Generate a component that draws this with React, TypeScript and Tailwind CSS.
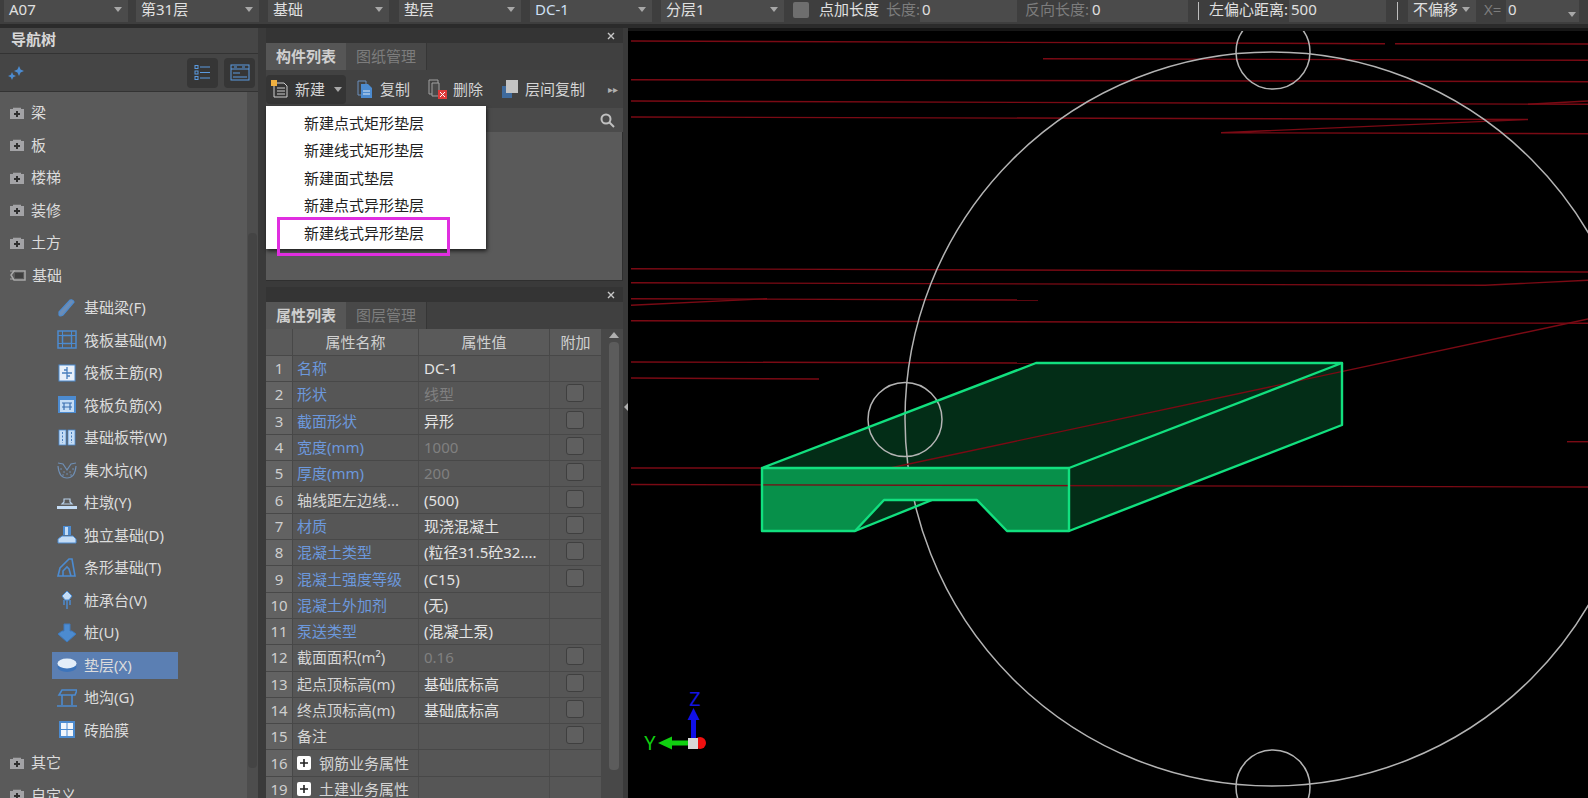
import React from 'react'

const Arrow = () => (
  <svg width="8" height="5" viewBox="0 0 8 5" className="shrink-0">
    <path d="M0 0h8L4 5z" fill="#a8a8a8" />
  </svg>
)

const Select = ({ label, className, blue }: { label: string; className: string; blue?: boolean }) => (
  <div className={`flex h-[22px] items-center justify-between bg-[#4b4b4b] pb-[3px] pl-[5px] pr-[6px] ${className}`}>
    <span className={blue ? 'text-[#cfe0f5]' : 'text-[#e0e0e0]'}>{label}</span>
    <Arrow />
  </div>
)

const Field = ({ value, className }: { value: string; className: string }) => (
  <div className={`flex h-[22px] items-center bg-[#4b4b4b] pb-[3px] pl-[2px] text-[#e0e0e0] ${className}`}>{value}</div>
)

const Folder = ({ open }: { open?: boolean }) =>
  open ? (
    <svg width="17" height="14" viewBox="0 0 17 14" fill="none" className="shrink-0">
      <path d="M1 3h5M1 11h4" stroke="#8f8f8f" strokeWidth="1.5" />
      <path d="M5 3h11v9H5l-3-5z" stroke="#a8a8a8" strokeWidth="1.5" />
      <rect x="6" y="5" width="8" height="5" fill="#3f3f3f" />
    </svg>
  ) : (
    <svg width="16" height="14" viewBox="0 0 16 14" className="shrink-0">
      <path d="M1 3h3V1h8v2h3v10H1z" fill="#a3a3a6" />
      <path d="M4 1.5h8" stroke="#6d6d6d" />
      <path d="M8 5v6M5 8h6" stroke="#2f2f2f" strokeWidth="2" />
    </svg>
  )

const B = '#4c8bd0'
const L = '#c4dcf5'

const icons: Record<string, React.ReactNode> = {
  beam: <path d="M2 14L13 2q3-1 4 2L6 17q-3 2-4 0z" fill="#6d8db5" stroke={B} strokeWidth="1.2" />,
  raft: (
    <g fill="none" stroke={B} strokeWidth="1.5">
      <rect x="1" y="1" width="18" height="17" />
      <rect x="5.5" y="5.5" width="9" height="8" />
      <path d="M1 5.5h18M1 13.5h18M5.5 1v17M14.5 1v17" strokeWidth="1" />
    </g>
  ),
  main: (
    <g>
      <rect x="2" y="2" width="16" height="16" fill="#e8f0fa" stroke={B} />
      <path d="M10 4v12M5 10h10M7 7h3M10 13h3" stroke="#4a7fbd" strokeWidth="1.3" fill="none" />
    </g>
  ),
  neg: (
    <g>
      <rect x="1" y="1" width="18" height="17" fill={B} />
      <rect x="3" y="5" width="14" height="12" fill={L} />
      <path d="M5 8h10M7 8v7M13 8v7M5 12h10" stroke="#3a6fb0" strokeWidth="1.2" fill="none" />
    </g>
  ),
  strip: (
    <g>
      <rect x="2" y="2" width="7" height="15" fill={L} stroke={B} strokeWidth="0.8" />
      <rect x="11" y="2" width="7" height="15" fill={L} stroke={B} strokeWidth="0.8" />
      <path d="M5.5 4v11M14.5 4v11" stroke="#4a7fbd" strokeDasharray="2 1.5" />
    </g>
  ),
  pit: (
    <g fill="none" stroke="#6f8fb5">
      <path d="M1 3l5 1 4 6 4-6 5-1M1 6q1 12 9 12t9-12" strokeWidth="1.2" />
      <path d="M4 9h.1M7 12h.1M10 14h.1M13 12h.1M16 9h.1M6 15h.1M14 15h.1" strokeWidth="1.6" strokeLinecap="round" />
    </g>
  ),
  cap: (
    <g>
      <path d="M7 9V6h6v3l2 2H5z" fill="none" stroke="#b7cfe8" strokeWidth="1.2" />
      <rect x="0" y="13" width="20" height="3" fill={L} />
    </g>
  ),
  isolated: (
    <g>
      <path d="M6 1h8v9H6z" fill={B} />
      <path d="M8 2h3v8H8z" fill={L} />
      <path d="M1 18v-4l4-3h11l3 3v4z" fill={L} stroke={B} />
    </g>
  ),
  stripF: <path d="M1 18l2-8 9-9h3l3 17zM6 18v-5l4-4 2 2 2 7" fill="none" stroke={B} strokeWidth="1.6" />,
  pilecap: (
    <g>
      <path d="M10 1l5 5-3 4H8L5 6z" fill={L} stroke={B} />
      <path d="M7 10v5M10 10v9M13 10v5" stroke={B} strokeWidth="1.5" />
    </g>
  ),
  pile: <path d="M7 1h6v7h2l4 3-9 8-9-8 4-3h2z" fill={B} stroke="#3e79bb" />,
  pad: (
    <g>
      <ellipse cx="10" cy="12" rx="9.5" ry="5" fill="#3c74bb" />
      <ellipse cx="10" cy="8.5" rx="9.5" ry="5" fill="#e3eef9" />
    </g>
  ),
  ditch: (
    <g fill="none" stroke={B} strokeWidth="1.6">
      <path d="M2 7h16l2-5H5zM2 7h16v0M5 7v10M15 7v10M0 18h20" />
    </g>
  ),
  brick: (
    <g>
      <rect x="2" y="1" width="16" height="17" fill={B} />
      <rect x="4" y="3" width="5.5" height="6" fill="#f2f6fb" />
      <rect x="10.5" y="3" width="5.5" height="6" fill="#f2f6fb" />
      <rect x="4" y="10" width="5.5" height="6" fill="#f2f6fb" />
      <rect x="10.5" y="10" width="5.5" height="6" fill="#f2f6fb" />
    </g>
  ),
}

const tree: { label: string; icon?: string; open?: boolean; active?: boolean }[] = [
  { label: '梁' },
  { label: '板' },
  { label: '楼梯' },
  { label: '装修' },
  { label: '土方' },
  { label: '基础', open: true },
  { label: '基础梁(F)', icon: 'beam' },
  { label: '筏板基础(M)', icon: 'raft' },
  { label: '筏板主筋(R)', icon: 'main' },
  { label: '筏板负筋(X)', icon: 'neg' },
  { label: '基础板带(W)', icon: 'strip' },
  { label: '集水坑(K)', icon: 'pit' },
  { label: '柱墩(Y)', icon: 'cap' },
  { label: '独立基础(D)', icon: 'isolated' },
  { label: '条形基础(T)', icon: 'stripF' },
  { label: '桩承台(V)', icon: 'pilecap' },
  { label: '桩(U)', icon: 'pile' },
  { label: '垫层(X)', icon: 'pad', active: true },
  { label: '地沟(G)', icon: 'ditch' },
  { label: '砖胎膜', icon: 'brick' },
  { label: '其它' },
  { label: '自定义' },
]

const TreeRow = ({ item }: { item: (typeof tree)[number] }) => {
  if (!item.icon) {
    return (
      <div className="flex h-[32.5px] shrink-0 items-center gap-[6px] pl-[9px] text-[#dcdcdc]">
        <Folder open={item.open} />
        <span>{item.label}</span>
      </div>
    )
  }
  return (
    <div className="flex h-[32.5px] shrink-0 items-center pl-[52px]">
      <div className={`flex h-[27px] w-[126px] items-center pl-[5px] text-[#dcdcdc] ${item.active ? 'bg-[#5b7fb3]' : ''}`}>
        <svg width="20" height="20" viewBox="0 0 20 20" className="mr-[7px] shrink-0">
          {icons[item.icon]}
        </svg>
        <span className="whitespace-nowrap">{item.label}</span>
      </div>
    </div>
  )
}

type Row = { n: string; name: string; value?: string; kind?: 'blue' | 'plain'; dim?: boolean; box?: boolean; plus?: boolean }

const rows: Row[] = [
  { n: '1', name: '名称', value: 'DC-1', kind: 'blue' },
  { n: '2', name: '形状', value: '线型', kind: 'blue', dim: true, box: true },
  { n: '3', name: '截面形状', value: '异形', kind: 'blue', box: true },
  { n: '4', name: '宽度(mm)', value: '1000', kind: 'blue', dim: true, box: true },
  { n: '5', name: '厚度(mm)', value: '200', kind: 'blue', dim: true, box: true },
  { n: '6', name: '轴线距左边线...', value: '(500)', box: true },
  { n: '7', name: '材质', value: '现浇混凝土', kind: 'blue', box: true },
  { n: '8', name: '混凝土类型', value: '(粒径31.5砼32....', kind: 'blue', box: true },
  { n: '9', name: '混凝土强度等级', value: '(C15)', kind: 'blue', box: true },
  { n: '10', name: '混凝土外加剂', value: '(无)', kind: 'blue' },
  { n: '11', name: '泵送类型', value: '(混凝土泵)', kind: 'blue' },
  { n: '12', name: '截面面积(m²)', value: '0.16', dim: true, box: true },
  { n: '13', name: '起点顶标高(m)', value: '基础底标高', box: true },
  { n: '14', name: '终点顶标高(m)', value: '基础底标高', box: true },
  { n: '15', name: '备注', box: true },
  { n: '16', name: '钢筋业务属性', plus: true },
  { n: '19', name: '土建业务属性', plus: true },
]

const PropRow = ({ row }: { row: Row }) => (
  <div className="flex h-[26.3px] shrink-0 border-b border-[#484848]">
    <div className="flex w-[27px] items-center justify-center border-r border-[#484848] bg-[#626262] text-[#cfcfcf]">{row.n}</div>
    <div className={`flex w-[126px] items-center whitespace-nowrap border-r border-[#4b4b4b] pl-[4px] ${row.kind === 'blue' ? 'text-[#6c98dc]' : 'text-[#d4d4d4]'}`}>
      {row.plus && (
        <span className="mr-[8px] flex h-[14px] w-[14px] items-center justify-center rounded-[2px] bg-white">
          <svg width="8" height="8" viewBox="0 0 8 8">
            <path d="M4 0v8M0 4h8" stroke="#222" strokeWidth="1.6" />
          </svg>
        </span>
      )}
      {row.name}
    </div>
    <div className={`flex w-[131px] items-center whitespace-nowrap border-r border-[#4b4b4b] pl-[5px] ${row.dim ? 'text-[#808080]' : 'text-[#e4e4e4]'}`}>
      {row.value}
    </div>
    <div className="flex w-[51px] items-center justify-center pr-[2px]">
      {row.box && <div className="mb-[3px] h-[18px] w-[18px] rounded-[3px] border border-[#3f3f3f] bg-[#5f5f5f]" />}
    </div>
  </div>
)

const Close = () => (
  <div className="flex h-[15px] shrink-0 items-center justify-end bg-[#343434] pr-[8px] pt-[1px]">
    <svg width="8" height="8" viewBox="0 0 8 8">
      <path d="M1 1l6 6M7 1L1 7" stroke="#c8c8c8" strokeWidth="1.4" />
    </svg>
  </div>
)

const Tabs = ({ a, b }: { a: string; b: string }) => (
  <div className="flex h-[27px] shrink-0 bg-[#404040]">
    <div className="flex w-[80px] items-center justify-center bg-[#565656] font-bold text-[#cfcfcf]">{a}</div>
    <div className="flex w-[81px] items-center justify-center border-r border-[#363636] bg-[#484848] text-[#7d7d7d]">{b}</div>
  </div>
)

const menu = ['新建点式矩形垫层', '新建线式矩形垫层', '新建面式垫层', '新建点式异形垫层', '新建线式异形垫层']

const redLines = [
  '631,41 1385,43.7',
  '1395,43.7 1588,44',
  '1043,58.7 1588,60.3',
  '631,79.7 1588,81.7',
  '631,101 1588,104.3',
  '631,117 1528,119.5 1221,132.7 1588,133.7',
  '1528,104.3 1588,101',
  '631,268.7 1588,272',
  '631,282.7 1485,285.3 1588,280.3',
  '631,298.7 1038,300',
  '631,305.3 767,298.7',
  '631,320.7 1588,323.3',
  '631,362 1036,363',
  '631,378 819,379',
  '631,468 762,468',
  '1567,441.7 1588,441.7',
]

const Canvas = () => (
  <svg viewBox="628 31 960 767" className="h-full w-full">
    <g fill="none" stroke="#7a0a14" strokeWidth="1.4">
      {redLines.map(p => (
        <polyline key={p} points={p} />
      ))}
    </g>
    {/* slab back faces sit under the axis circles */}
    <path d="M1069 468L1342 363V425L1069 531Z" fill="#032d17" />
    <path d="M762 468L1036 363H1342L1069 468Z" fill="#032d17" />
    <path d="M855 531L884 500H932Z" fill="#032d17" />
    <g fill="none" stroke="#b4b4b4" strokeWidth="1.5">
      <circle cx="1272" cy="419" r="367" />
      <circle cx="1273" cy="52" r="37" />
      <circle cx="1273" cy="787" r="37" />
      <circle cx="905" cy="419.5" r="37" />
    </g>
    <path d="M762 468H1069V531H1007L977 500H884L855 531H762Z" fill="#07904a" />
    <path d="M890 468L1588 319" stroke="#7a0a14" strokeWidth="1.4" fill="none" />
    <path d="M631 484.5L1588 487" stroke="#7a0a14" strokeWidth="1.4" fill="none" />
    <g fill="none" stroke="#12e07f" strokeWidth="2.4" strokeLinejoin="round">
      <path d="M762 468L1036 363H1342L1069 468H762V531H855L884 500H977L1007 531H1069V468" />
      <path d="M1342 363V425L1069 531" />
      <path d="M855 531L932 500" />
    </g>
    <circle cx="700" cy="743" r="6" fill="#f01010" />
    <path d="M693.5 742V717" stroke="#1010e8" strokeWidth="5" />
    <path d="M693.5 708l-6 12h12z" fill="#1010e8" />
    <path d="M668 743H690" stroke="#10d010" strokeWidth="5" />
    <path d="M658 743l14-6.500v13z" fill="#10d010" />
    <rect x="688" y="738" width="10" height="11" fill="#d8d8d8" />
    <text x="695" y="706" textAnchor="middle" fill="#1414e0" fontSize="20">Z</text>
    <text x="650" y="750" textAnchor="middle" fill="#10d010" fontSize="20">Y</text>
  </svg>
)

export default function App() {
  return (
    <div className="flex h-[798px] w-[1588px] flex-col overflow-hidden bg-[#3a3a3a] font-['Noto_Sans','Noto_Sans_CJK_SC',sans-serif] text-[15px] leading-none">
      {/* top options bar */}
      <div className="flex h-[24px] shrink-0 items-start whitespace-nowrap bg-[#3e3e3e] pl-[4px]">
        <Select label="A07" className="w-[124px]" />
        <Select label="第31层" className="ml-[8px] w-[123px]" />
        <Select label="基础" className="ml-[9px] w-[121px]" />
        <Select label="垫层" className="ml-[10px] w-[122px]" />
        <Select label="DC-1" className="ml-[9px] w-[122px]" blue />
        <Select label="分层1" className="ml-[9px] w-[123px]" />
        <div className="ml-[9px] mt-[2px] h-[16px] w-[16px] rounded-[2px] bg-[#6e6e6e]" />
        <span className="ml-[10px] mt-[2px] w-[60px] text-[#e0e0e0]">点加长度</span>
        <span className="ml-[7px] mt-[2px] w-[34px] text-[#7c7c7c]">长度:</span>
        <Field value="0" className="w-[97px]" />
        <span className="ml-[8px] mt-[2px] w-[65px] text-[#7c7c7c]">反向长度:</span>
        <Field value="0" className="w-[98px]" />
        <div className="ml-[10px] mt-[2px] h-[18px] w-[1px] bg-[#bdbdbd]" />
        <span className="ml-[10px] mt-[2px] w-[80px] text-[#e0e0e0]">左偏心距离:</span>
        <Field value="500" className="w-[97px]" />
        <div className="ml-[11px] mt-[2px] h-[18px] w-[1px] bg-[#bdbdbd]" />
        <Select label="不偏移" className="ml-[10px] w-[68px]" />
        <span className="ml-[8px] mt-[2px] w-[22px] text-[#7c7c7c]">X=</span>
        <div className="flex h-[22px] w-[73px] items-center justify-between bg-[#4b4b4b] pb-[3px] pl-[2px] pr-[3px] text-[#e0e0e0]">
          0
          <span className="mt-[9px]">
            <Arrow />
          </span>
        </div>
      </div>
      <div className="h-[4px] shrink-0 bg-[#2b2b2b]" />

      <div className="flex min-h-0 flex-1">
        {/* navigation tree */}
        <div className="flex w-[258px] shrink-0 flex-col">
          <div className="flex h-[26px] shrink-0 items-center border-b border-[#333] bg-[#464646] pb-[2px] pl-[11px] font-bold text-[#d8d8d8]">导航树</div>
          <div className="flex h-[38px] shrink-0 items-center border-b border-[#333] bg-[#454545] pl-[8px] pr-[3px]">
            <svg width="17" height="14" viewBox="0 0 17 14">
              <path d="M11 0l1.6 3.4L16 5l-3.4 1.6L11 10 9.4 6.6 6 5l3.4-1.6zM4 6l1.2 2.8L8 10l-2.8 1.2L4 14l-1.2-2.8L0 10l2.8-1.2z" fill="#4c8bd0" />
            </svg>
            <div className="ml-auto flex h-[30px] w-[31px] items-center justify-center rounded-[4px] bg-[#363636]">
              <svg width="17" height="17" viewBox="0 0 17 17" fill="none" stroke="#5a9ae0">
                <path d="M6 3h10M6 8.5h10M6 14h10" />
                <rect x="1" y="1.5" width="3" height="3" />
                <rect x="1" y="7" width="3" height="3" />
                <rect x="1" y="12.5" width="3" height="3" />
              </svg>
            </div>
            <div className="ml-[6px] flex h-[30px] w-[31px] items-center justify-center rounded-[4px] bg-[#363636]">
              <svg width="20" height="17" viewBox="0 0 20 17" fill="none" stroke="#5a9ae0">
                <rect x="1" y="1" width="18" height="15" />
                <path d="M1 5h18M4 3h3M12 3h3M3 9h7M3 13h14" />
              </svg>
            </div>
          </div>
          <div className="flex min-h-0 flex-1 bg-[#5a5a5a]">
            <div className="flex flex-1 flex-col overflow-hidden pt-[4.5px]">
              {tree.map(item => (
                <TreeRow key={item.label} item={item} />
              ))}
            </div>
            <div className="w-[11px] shrink-0 bg-[#4d4d4d]">
              <div className="ml-[1px] mt-[141px] h-[535px] w-[9px] rounded-[4px] bg-[#444]" />
            </div>
          </div>
        </div>

        <div className="w-[8px] shrink-0 bg-[#3a3a3a]" />

        {/* component list + property list */}
        <div className="flex w-[357px] shrink-0 flex-col">
          <Close />
          <Tabs a="构件列表" b="图纸管理" />
          <div className="flex h-[38px] shrink-0 items-center bg-[#424242] text-[#d4d4d4]">
            <div className="relative flex h-[29px] w-[80px] items-center rounded-[4px] bg-[#353535] pl-[5px]">
              <svg width="18" height="18" viewBox="0 0 18 18" className="mr-[6px]">
                <path d="M3 3h10l3 3v11H3z" fill="none" stroke="#cfcfcf" />
                <path d="M6 8h8M6 11h8M6 14h8" stroke="#cfcfcf" />
                <rect x="0" y="0" width="6" height="6" fill="#f0b040" />
              </svg>
              新建
              <span className="ml-[9px]">
                <Arrow />
              </span>
              {/* dropdown menu */}
              <div className="absolute left-0 top-[31px] z-10 w-[220px] bg-white pb-[2px] pt-[4px] shadow-[1px_2px_4px_rgba(0,0,0,0.7)]">
                {menu.map(m => (
                  <div key={m} className="flex h-[27.5px] items-center pl-[38px] text-[#222]">{m}</div>
                ))}
                <div className="absolute left-[11px] top-[111px] h-[39px] w-[173px] border-[3px] border-[#e02ee0]" />
              </div>
            </div>
            <svg width="16" height="18" viewBox="0 0 16 18" className="ml-[11px] shrink-0">
              <path d="M1 1h8v14H1z" fill="none" stroke="#6a8fbd" />
              <path d="M4 4h7l4 4v10H4z" fill="#4c8bd0" />
              <path d="M6 11h7M6 14h7" stroke="#dce9f7" />
            </svg>
            <span className="ml-[7px]">复制</span>
            <svg width="20" height="20" viewBox="0 0 20 20" className="ml-[18px] shrink-0">
              <path d="M1 1h9v14H1z" fill="none" stroke="#a0a0a0" />
              <path d="M4 4h7v13H4z" fill="#4a4a4a" stroke="#a0a0a0" />
              <rect x="10" y="11" width="9" height="9" fill="#e03a3a" />
              <path d="M12 13l5 5M17 13l-5 5" stroke="#fff" />
            </svg>
            <span className="ml-[5px]">删除</span>
            <svg width="17" height="18" viewBox="0 0 17 18" className="ml-[18px] shrink-0">
              <rect x="1" y="6" width="10" height="12" fill="#3f6a9c" />
              <rect x="5" y="0" width="12" height="13" fill="#c4c4c4" />
            </svg>
            <span className="ml-[7px]">层间复制</span>
            <span className="ml-auto mr-[5px] text-[10px] text-[#b0b0b0]">▸▸</span>
          </div>
          <div className="flex h-[24px] shrink-0 items-center justify-end bg-[#4b4b4b] pr-[8px]">
            <svg width="15" height="15" viewBox="0 0 15 15" fill="none" stroke="#c0c0c0" strokeWidth="2">
              <circle cx="6" cy="6" r="4.5" />
              <path d="M9.5 9.5L14 14" />
            </svg>
          </div>
          <div className="h-[149px] shrink-0 border-b border-r border-[#2f2f2f] bg-[#5a5a5a]" />
          <div className="h-[6px] shrink-0 bg-[#3a3a3a]" />
          <Close />
          <Tabs a="属性列表" b="图层管理" />
          <div className="flex min-h-0 flex-1 overflow-hidden bg-[#565656]">
            <div className="flex w-[335px] shrink-0 flex-col">
              <div className="flex h-[27px] shrink-0 border-b border-[#484848] bg-[#5a5a5a] text-[#d0d0d0]">
                <div className="w-[27px] border-r border-[#484848]" />
                <div className="flex w-[126px] items-center justify-center border-r border-[#484848]">属性名称</div>
                <div className="flex w-[131px] items-center justify-center border-r border-[#484848]">属性值</div>
                <div className="flex w-[51px] items-center justify-center">附加</div>
              </div>
              {rows.map(r => (
                <PropRow key={r.n} row={r} />
              ))}
            </div>
            <div className="flex flex-1 flex-col items-center bg-[#484848] pl-[4px]">
              <svg width="10" height="6" viewBox="0 0 10 6" className="mt-[3px]">
                <path d="M0 6L5 0l5 6z" fill="#b0b0b0" />
              </svg>
              <div className="mt-[4px] h-[428px] w-[10px] rounded-[4px] bg-[#5c5c5c]" />
            </div>
          </div>
        </div>

        {/* splitter */}
        <div className="flex w-[5px] shrink-0 items-center justify-center bg-[#3a3a3a] pb-[12px]">
          <svg width="4" height="8" viewBox="0 0 4 8">
            <path d="M4 0v8L0 4z" fill="#b0b0b0" />
          </svg>
        </div>

        {/* drawing canvas */}
        <div className="min-w-0 flex-1 border-t-[3px] border-[#161616] bg-black">
          <Canvas />
        </div>
      </div>
    </div>
  )
}
